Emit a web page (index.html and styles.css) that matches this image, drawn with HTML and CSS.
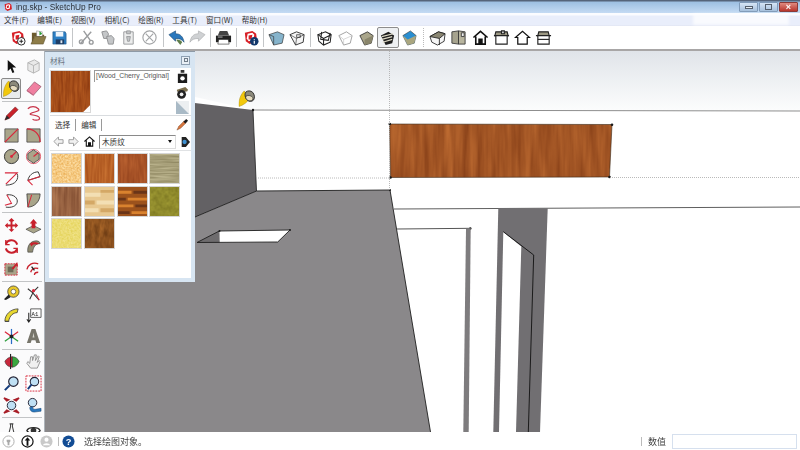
FILE: index.html
```html
<!DOCTYPE html>
<html lang="zh">
<head>
<meta charset="utf-8">
<title>ing.skp - SketchUp Pro</title>
<link rel="stylesheet" href="styles.css">
</head>
<body>
<svg class="defs" aria-hidden="true">
  <defs>
    <filter id="wood" x="0" y="0" width="1" height="1" color-interpolation-filters="sRGB"><feTurbulence type="fractalNoise" baseFrequency="0.13 0.012" numOctaves="3" seed="4"/><feColorMatrix values="0.3 0 0 0 0.48  0.24 0 0 0 0.21  0.14 0 0 0 0.07  0 0 0 0 1"/><feComposite in2="SourceGraphic" operator="in"/></filter>
    <filter id="woodp" x="0" y="0" width="1" height="1" color-interpolation-filters="sRGB"><feTurbulence type="fractalNoise" baseFrequency="0.4 0.04" numOctaves="3" seed="9"/><feColorMatrix values="0.24 0 0 0 0.52  0.2 0 0 0 0.2  0.1 0 0 0 0.05  0 0 0 0 1"/><feComposite in2="SourceGraphic" operator="in"/></filter>
    <filter id="s1" x="0" y="0" width="1" height="1" color-interpolation-filters="sRGB"><feTurbulence type="fractalNoise" baseFrequency="0.5" numOctaves="2" seed="2"/><feColorMatrix values="0.12 0 0 0 0.9  0.3 0 0 0 0.64  0.5 0 0 0 0.26  0 0 0 0 1"/><feComposite in2="SourceGraphic" operator="in"/></filter>
    <filter id="s2" x="0" y="0" width="1" height="1" color-interpolation-filters="sRGB"><feTurbulence type="fractalNoise" baseFrequency="0.4 0.03" numOctaves="2" seed="3"/><feColorMatrix values="0.24 0 0 0 0.6  0.24 0 0 0 0.26  0.16 0 0 0 0.07  0 0 0 0 1"/><feComposite in2="SourceGraphic" operator="in"/></filter>
    <filter id="s3" x="0" y="0" width="1" height="1" color-interpolation-filters="sRGB"><feTurbulence type="fractalNoise" baseFrequency="0.3 0.05" numOctaves="2" seed="6"/><feColorMatrix values="0.2 0 0 0 0.55  0.16 0 0 0 0.24  0.1 0 0 0 0.1  0 0 0 0 1"/><feComposite in2="SourceGraphic" operator="in"/></filter>
    <filter id="s4" x="0" y="0" width="1" height="1" color-interpolation-filters="sRGB"><feTurbulence type="fractalNoise" baseFrequency="0.04 0.5" numOctaves="2" seed="5"/><feColorMatrix values="0.3 0 0 0 0.5  0.3 0 0 0 0.47  0.3 0 0 0 0.32  0 0 0 0 1"/><feComposite in2="SourceGraphic" operator="in"/></filter>
    <filter id="s5" x="0" y="0" width="1" height="1" color-interpolation-filters="sRGB"><feTurbulence type="fractalNoise" baseFrequency="0.3 0.03" numOctaves="2" seed="8"/><feColorMatrix values="0.28 0 0 0 0.46  0.26 0 0 0 0.26  0.2 0 0 0 0.16  0 0 0 0 1"/><feComposite in2="SourceGraphic" operator="in"/></filter>
    <filter id="s8" x="0" y="0" width="1" height="1" color-interpolation-filters="sRGB"><feTurbulence type="fractalNoise" baseFrequency="0.2" numOctaves="2" seed="7"/><feColorMatrix values="0.2 0 0 0 0.46  0.2 0 0 0 0.44  0.1 0 0 0 0.12  0 0 0 0 1"/><feComposite in2="SourceGraphic" operator="in"/></filter>
    <filter id="s9" x="0" y="0" width="1" height="1" color-interpolation-filters="sRGB"><feTurbulence type="fractalNoise" baseFrequency="0.5" numOctaves="2" seed="12"/><feColorMatrix values="0.08 0 0 0 0.88  0.1 0 0 0 0.81  0.3 0 0 0 0.3  0 0 0 0 1"/><feComposite in2="SourceGraphic" operator="in"/></filter>
    <filter id="s10" x="0" y="0" width="1" height="1" color-interpolation-filters="sRGB"><feTurbulence type="fractalNoise" baseFrequency="0.2 0.08" numOctaves="3" seed="14"/><feColorMatrix values="0.34 0 0 0 0.38  0.24 0 0 0 0.2  0.12 0 0 0 0.06  0 0 0 0 1"/><feComposite in2="SourceGraphic" operator="in"/></filter>
    <symbol id="su" viewBox="0 0 18 18"><path d="M3 4l8-2 4 3 1 8-8 3-4-3z" fill="#d81f26"/><path d="M6 5l5-1 2 2-1 6-5 1-2-3z" fill="#fff"/><path d="M7 7l4-1-1 5-3 0z" fill="#d81f26"/></symbol>
    <symbol id="bucket" viewBox="0 0 18 18"><path d="M6 1C2 5 0 11 .5 17.500 5 16 10 13 12 8z" fill="#f2c80c" stroke="#a68a10" stroke-width=".5"/><path d="M8 2c2-1.500 5-1.500 7 .5s2.500 6 1 8-5 2-7 0-3-6.500-1-8.500z" fill="#8c8a7c" stroke="#2c2c2c" stroke-width="1"/><path d="M8 6.500c2-1.500 6-.5 7 1.500s-.5 3.500-3 3.500-5.500-3-4-5z" fill="#e6dcc0" stroke="#2c2c2c" stroke-width=".7"/></symbol>
  </defs>
</svg>
<div class="app">
  <header class="titlebar">
    <svg class="title-logo" viewBox="0 0 18 18"><use href="#su"/></svg>
    <span class="title-text">ing.skp - SketchUp Pro</span>
    <div class="win-btns">
      <span class="win-btn"><i class="wb-min"></i></span>
      <span class="win-btn"><i class="wb-max"></i></span>
      <span class="win-btn win-close"><i class="wb-x">×</i></span>
    </div>
  </header>
  <nav class="menubar">
    <span>文件(F)</span><span>编辑(E)</span><span>视图(V)</span><span>相机(C)</span><span>绘图(R)</span><span>工具(T)</span><span>窗口(W)</span><span>帮助(H)</span>
    <i class="mark"></i>
  </nav>
  <div class="toolbar">
    <span class="tb"><svg viewBox="0 0 18 18"><use href="#su"/><circle cx="13" cy="13" r="4" fill="#fff" stroke="#222"/><path d="M13 11v4M11 13h4" stroke="#222"/></svg></span>
    <span class="tb"><svg viewBox="0 0 18 18"><path d="M2 4h5l1 2h7v2H5L2 15z" fill="#6b5a2e"/><path d="M7 2l6 1 0 5-6 0z" fill="#fff" stroke="#7a7a7a" stroke-width=".5"/><path d="M10 2l3 3-3 2z" fill="#2f9e3a"/><path d="M5 8h12l-3 8H1z" fill="#8d7c48" stroke="#4a3f1e" stroke-width=".5"/></svg></span>
    <span class="tb"><svg viewBox="0 0 18 18"><path d="M2 3h13l1 2v11H2z" fill="#2c7fc4" stroke="#1b4f80" stroke-width=".6"/><path d="M5 3h8v5H5z" fill="#eef4fa"/><path d="M5 11h9v5H5z" fill="#1e3e66"/><path d="M10 12h2v3h-2z" fill="#dfe8f0"/></svg></span>
    <i class="tsep"></i>
    <span class="tb"><svg viewBox="0 0 18 18" fill="none" stroke="#9a9c9e" stroke-width="1.5"><path d="M3 15L14 3M6 2l7 10"/><circle cx="3.5" cy="13.5" r="2"/><circle cx="14" cy="14" r="2"/></svg></span>
    <span class="tb"><svg viewBox="0 0 18 18" fill="#c4c6c8" stroke="#8f9193"><path d="M3 3l5-1 2 3-1 5-4 0z"/><path d="M8 8l5-1 3 3-1 6-5 0z"/></svg></span>
    <span class="tb"><svg viewBox="0 0 18 18" fill="#eceded" stroke="#9a9c9e"><path d="M4 3h10v13H4z"/><path d="M7 2h4v3H7z" fill="#c4c6c8"/><path d="M7 8h4l-1 5H8z" fill="#c4c6c8"/></svg></span>
    <span class="tb"><svg viewBox="0 0 18 18" fill="none" stroke="#a2a4a6" stroke-width="1.2"><circle cx="9" cy="9" r="7"/><path d="M5 5l8 8M13 5l-8 8"/></svg></span>
    <i class="tsep"></i>
    <span class="tb"><svg viewBox="0 0 18 18"><path d="M1 6l7-4v3c5 0 8 3 9 9-2-3-5-4-9-4v3z" fill="#2a78bd" stroke="#123f6b" stroke-width=".6"/><path d="M9 11c3 0 5 1 6 3l-2 3-4-5z" fill="#5f7d4a"/></svg></span>
    <span class="tb"><svg viewBox="0 0 18 18"><path d="M17 6l-7-4v3C5 5 2 8 1 14c2-3 5-4 9-4v3z" fill="#cfd1d3" stroke="#a3a5a7" stroke-width=".6"/></svg></span>
    <i class="tsep"></i>
    <span class="tb"><svg viewBox="0 0 18 18"><path d="M5 2h8l2 5H3z" fill="#444"/><path d="M1 7h16v7H1z" fill="#222"/><path d="M4 11h10l1 5H3z" fill="#fff" stroke="#222" stroke-width=".6"/><path d="M3 8h5v1H3z" fill="#bbb"/></svg></span>
    <i class="tsep"></i>
    <span class="tb"><svg viewBox="0 0 18 18"><use href="#su"/><circle cx="13" cy="13" r="4.5" fill="#12386b"/><path d="M13 10.500v.8M13 12.500v3" stroke="#fff" stroke-width="1.200"/></svg></span>
    <i class="tsep"></i>
    <span class="tb"><svg viewBox="0 0 18 18"><path d="M1 6l9-3 7 3-2 9-9 2z" fill="#86b4cc" stroke="#333" stroke-width=".7"/><path d="M1 6l5 2v9" fill="none" stroke="#333" stroke-width=".7"/></svg></span>
    <span class="tb"><svg viewBox="0 0 18 18"><path d="M1 6l7-3 8 3-1 8-8 3z" fill="#f5f5f5" stroke="#333"/><path d="M8 10l8-4M8 10l-1 7M8 10L1 6M8 6h4v3H8z" stroke="#333" stroke-width=".7" fill="#d8d8d8"/></svg></span>
    <i class="tsep tsep-n"></i>
    <span class="tb"><svg viewBox="0 0 18 18" fill="none" stroke="#222" stroke-width="1.100"><path d="M2 6l8-3 6 3-1 8-7 3-5-4z"/><path d="M8 10l8-4M8 10v7M8 10L2 6M6 3l-1 8 8 1 2-8"/></svg></span>
    <span class="tb"><svg viewBox="0 0 18 18"><path d="M2 7l8-4 6 4-2 8-7 2z" fill="#fff" stroke="#888" stroke-width=".8"/><path d="M7 17l0-6 9-4M7 11L2 7" fill="none" stroke="#bbb" stroke-width=".6"/></svg></span>
    <span class="tb"><svg viewBox="0 0 18 18"><path d="M2 7l8-4 6 4-2 8-7 2z" fill="#a9a58a" stroke="#333" stroke-width=".9"/><path d="M7 11l9-4v1l-2 7-7 2z" fill="#8a866c"/></svg></span>
    <span class="tb tb-on"><svg viewBox="0 0 18 18"><path d="M2 7l8-4 6 4-2 8-7 2z" fill="#1d1d1d"/><path d="M3 8l12-3M3 11l11-3M4 14l10-3" stroke="#dcd8c4" stroke-width="1.300"/></svg></span>
    <span class="tb"><svg viewBox="0 0 18 18"><path d="M2 7l8-5 6 5-2 8-7 2z" fill="#2a8ed0" stroke="#333" stroke-width=".6"/><path d="M2 7l5 4 9-4-2 8-7 2z" fill="#aaa67f"/></svg></span>
    <i class="tsep tsep-d"></i>
    <span class="tb"><svg viewBox="0 0 18 18" stroke="#222" stroke-width=".9"><path d="M1 8l9-5 7 2-1 8-7 4-6-3z" fill="#f6f6f6"/><path d="M1 8l9-5 7 2-6 5z" fill="#8a8672"/><path d="M11 10v7" fill="none"/></svg></span>
    <span class="tb"><svg viewBox="0 0 18 18" stroke="#333" stroke-width=".9"><path d="M2 3l7-1v14l-7-1z" fill="#a6a38e"/><path d="M9 2l7 1v13l-7 0z" fill="#b8b59f"/><path d="M12 4h3v4h-3z" fill="#eee"/></svg></span>
    <span class="tb"><svg viewBox="0 0 18 18" fill="#fff" stroke="#111" stroke-width="1.700"><path d="M1.500 9L9 2.500 16.500 9M4 8v8h10V8"/><path d="M7.500 16v-5h3v5" fill="#111"/></svg></span>
    <span class="tb"><svg viewBox="0 0 18 18" stroke="#222" stroke-width="1.200"><path d="M2 7h14l-1-4H3z" fill="#9c9883"/><path d="M9 2h3v3H9z" fill="#ddd"/><path d="M1 7h16M3 7v9h12V7" fill="#fff"/></svg></span>
    <span class="tb"><svg viewBox="0 0 18 18" fill="#fff" stroke="#111" stroke-width="1.300"><path d="M1.500 9L9 2.500 16.500 9 14 9v7H4V9z"/></svg></span>
    <span class="tb"><svg viewBox="0 0 18 18" stroke="#222" stroke-width="1.200"><path d="M3 7l1-4h10l1 4z" fill="#9c9883"/><path d="M1 7h16M3 7v9h12V7" fill="#fff"/><path d="M3 11h12" fill="none"/></svg></span>
  </div>
  <main class="work">
    <aside class="lefttools">
      <div class="lt-grip"></div>
      <div class="lt-row"><span class="lb"><svg viewBox="0 0 18 18"><path d="M5 2v12l3-3 2 5 2-1-2-5h4z" fill="#111"/></svg></span><span class="lb"><svg viewBox="0 0 18 18" stroke="#b5b5b5" fill="#e9e9e9"><path d="M3 5l7-3 5 3v8l-6 3-6-3z"/><path d="M9 8l6-3M9 8v8M9 8L3 5"/></svg></span></div>
      <div class="lt-row"><span class="lb lb-on"><svg viewBox="0 0 18 18"><use href="#bucket"/></svg></span><span class="lb"><svg viewBox="0 0 18 18"><path d="M2 11L10 2l7 5-8 9z" fill="#ef7fa0" stroke="#7b3b50" stroke-width=".6"/><path d="M2 11l7 5 0 1-7-5z" fill="#c65c7c"/></svg></span></div>
      <i class="lsep"></i>
      <div class="lt-row"><span class="lb"><svg viewBox="0 0 18 18"><path d="M2 16l2-5L13 2l3 3-9 9z" fill="#c9232b" stroke="#5a1013" stroke-width=".5"/><path d="M2 16l2-5 3 3z" fill="#2b2b2b"/></svg></span><span class="lb"><svg viewBox="0 0 18 18" fill="none" stroke="#c8354a" stroke-width="1.300"><path d="M3 4c3-3 8-3 11 0s-5 3-8 5 7 1 9 4-4 4-7 2"/></svg></span></div>
      <div class="lt-row"><span class="lb"><svg viewBox="0 0 18 18"><path d="M2 2h14v14H2z" fill="#a9a58a" stroke="#444" stroke-width=".8"/><path d="M2 16L16 2" stroke="#d8283c" stroke-width="1.300"/></svg></span><span class="lb"><svg viewBox="0 0 18 18"><path d="M2 2h14v14H2z" fill="#a9a58a" stroke="#444" stroke-width=".8"/><path d="M2 2c8 0 14 6 14 14" fill="none" stroke="#d8283c" stroke-width="1.300"/></svg></span></div>
      <div class="lt-row"><span class="lb"><svg viewBox="0 0 18 18"><circle cx="9" cy="9" r="7.500" fill="#a9a58a" stroke="#333"/><path d="M9 9l5-5" stroke="#d8283c" stroke-width="1.300"/><circle cx="9" cy="9" r="1.500" fill="#d8283c"/></svg></span><span class="lb"><svg viewBox="0 0 18 18"><circle cx="9" cy="9" r="7.500" fill="none" stroke="#d8283c" stroke-width=".8"/><path d="M9 2l6 4v6l-6 4-6-4V6z" fill="#a9a58a" stroke="#333" stroke-width=".8"/><path d="M9 9l5-4" stroke="#d8283c" stroke-width="1.300"/></svg></span></div>
      <div class="lt-row"><span class="lb"><svg viewBox="0 0 18 18" fill="none"><path d="M2 3h13L3 15" stroke="#d8283c" stroke-width="1.200"/><path d="M15 4c2 5-1 12-12 12" stroke="#333"/></svg></span><span class="lb"><svg viewBox="0 0 18 18"><path d="M3 11C4 6 8 2 14 2l2 5z" fill="#fff" stroke="#333"/><path d="M3 11l13-4M3 11l5 5" stroke="#d8283c" stroke-width="1.100"/></svg></span></div>
      <div class="lt-row"><span class="lb"><svg viewBox="0 0 18 18" fill="none"><path d="M4 3c8-1 12 4 11 8s-6 6-12 5" stroke="#333"/><path d="M4 3l5 9-7 2" stroke="#d8283c" stroke-width="1.100"/></svg></span><span class="lb"><svg viewBox="0 0 18 18"><path d="M2 2h14c0 8-6 14-13 14z" fill="#a9a58a" stroke="#333" stroke-width=".8"/><path d="M3 16L7 3" stroke="#d8283c" stroke-width="1.100"/></svg></span></div>
      <i class="lsep"></i>
      <div class="lt-row"><span class="lb"><svg viewBox="0 0 18 18" fill="#c8202c"><path d="M9 1l3 3-2 1v3h3V6l3 3-3 3v-2h-3v3h2l-3 3-3-3h2v-3H5v2L2 9l3-3v2h3V5L6 4z"/></svg></span><span class="lb"><svg viewBox="0 0 18 18"><path d="M1 13l8-4 8 4-8 4z" fill="#a9a58a" stroke="#333" stroke-width=".6"/><path d="M9 2l4 5h-2v5H7V7H5z" fill="#c8202c"/></svg></span></div>
      <div class="lt-row"><span class="lb"><svg viewBox="0 0 18 18" fill="none" stroke="#c8202c" stroke-width="2.200"><path d="M15 7a6.500 6.500 0 0 0-12-1"/><path d="M3 11a6.500 6.500 0 0 0 12 1"/><path d="M3 2v5h4M15 16v-5h-4" stroke-width="1.500"/></svg></span><span class="lb"><svg viewBox="0 0 18 18"><path d="M3 15C2 8 6 3 12 3c3 0 4 2 4 3-5 0-7 3-8 9z" fill="#8f8b72" stroke="#333" stroke-width=".6"/><path d="M5 6c3-2 7-2 10 0l-3 1c-2-1-4 0-5 2z" fill="#c8202c"/></svg></span></div>
      <div class="lt-row"><span class="lb"><svg viewBox="0 0 18 18"><path d="M2 4h13v12H2z" fill="#a9a58a" stroke="#d8283c" stroke-dasharray="2 1"/><path d="M5 7h6v6H5z" fill="#6e6b57"/><path d="M9 9l6-7 1 5-2-1-3 4z" fill="#c8202c"/></svg></span><span class="lb"><svg viewBox="0 0 18 18" fill="none" stroke="#c8202c" stroke-width="1.400"><path d="M2 10C3 5 8 2 14 4M6 13c1-3 4-5 8-4M10 16c0-2 2-3 4-3"/><path d="M7 7l3 4" stroke="#222"/></svg></span></div>
      <i class="lsep"></i>
      <div class="lt-row"><span class="lb"><svg viewBox="0 0 18 18"><circle cx="11" cy="7" r="6" fill="#e8c82a" stroke="#333" stroke-width=".8"/><circle cx="11" cy="7" r="2.500" fill="#fff" stroke="#333" stroke-width=".6"/><path d="M6 10L1 15l2 1 5-3z" fill="#222"/></svg></span><span class="lb"><svg viewBox="0 0 18 18" fill="none" stroke="#333" stroke-width="1.100"><path d="M3 4l5 4 7 8M14 2L9 7l-4 8"/><circle cx="9" cy="6" r="1.700" fill="#d8283c" stroke="none"/><path d="M12 10l3 6" stroke="#d8283c"/></svg></span></div>
      <div class="lt-row"><span class="lb"><svg viewBox="0 0 18 18"><path d="M2 15C2 8 8 2 16 2l-1 4C11 6 7 9 6 15z" fill="#e8d830" stroke="#333" stroke-width=".8"/><path d="M2 15h4l1 1H2z" fill="#333"/></svg></span><span class="lb"><svg viewBox="0 0 18 18"><path d="M6 2h11v9H6z" fill="#fff" stroke="#333" stroke-width=".8"/><text x="7" y="9.500" class="a1">A1</text><path d="M4 6v9M2 13l2 3 2-3" stroke="#222" fill="none" stroke-width="1.100"/></svg></span></div>
      <div class="lt-row"><span class="lb"><svg viewBox="0 0 18 18" stroke-width="1.300"><path d="M9 9L2 4" stroke="#d8283c"/><path d="M9 9l7 5" stroke="#2a9c3a"/><path d="M9 9V1" stroke="#2a6cc8"/><path d="M9 9L2 14" stroke="#2a9c3a"/><path d="M9 9l7-5" stroke="#d8283c"/><path d="M9 9v8" stroke="#2a6cc8"/><circle cx="9" cy="9" r="2" fill="#222" stroke="none"/></svg></span><span class="lb"><svg viewBox="0 0 18 18"><path d="M7 1h4l5 15H12l-1-3H7l-1 3H2z" fill="#77756b"/><path d="M9 5l-1 5h2z" fill="#d6d5ce"/></svg></span></div>
      <i class="lsep"></i>
      <div class="lt-row"><span class="lb"><svg viewBox="0 0 18 18"><path d="M2 9c2-4 6-5 8-5v11C6 15 3 13 2 9z" fill="#c8283c" stroke="#333" stroke-width=".6"/><path d="M10 4c3 0 6 2 7 5-1 3-4 6-7 6z" fill="#3aa83f" stroke="#333" stroke-width=".6"/><path d="M8 1v16" stroke="#222" stroke-width="1.200"/></svg></span><span class="lb"><svg viewBox="0 0 18 18" fill="#f0f0f0" stroke="#8a8a8a" stroke-width=".9"><path d="M2 11l4 5h7l3-7-1-1-2 2 2-6-1-1-3 5 1-6-2 0-2 6V4H6L5 11 3 9z"/></svg></span></div>
      <div class="lt-row"><span class="lb"><svg viewBox="0 0 18 18"><circle cx="11" cy="7" r="5" fill="#bfe0f4" stroke="#223" stroke-width="1.200"/><path d="M7 11l-5 5" stroke="#123a7a" stroke-width="2.200"/></svg></span><span class="lb"><svg viewBox="0 0 18 18"><path d="M1 1h16v16H1z" fill="#fff" stroke="#d8283c" stroke-dasharray="2 1"/><circle cx="10" cy="7" r="4.500" fill="#bfe0f4" stroke="#223" stroke-width="1.100"/><path d="M7 10l-4 5" stroke="#123a7a" stroke-width="2"/></svg></span></div>
      <div class="lt-row"><span class="lb"><svg viewBox="0 0 18 18"><circle cx="9" cy="9" r="4.500" fill="#bfe0f4" stroke="#223"/><path d="M1 1l5 2-2 1zM17 1l-5 2 2 1zM1 17l5-2-2-1zM17 17l-5-2 2-1z" fill="#a81e28" stroke="#a81e28" stroke-width="1.500"/></svg></span><span class="lb"><svg viewBox="0 0 18 18"><circle cx="8" cy="6" r="4.500" fill="#bfe0f4" stroke="#223"/><path d="M17 15l-7 1c-4 0-5-3-5-5l3-1c0 3 2 3 3 3l6-1z" fill="#2a78bd" stroke="#123f6b" stroke-width=".5"/></svg></span></div>
      <i class="lsep"></i>
      <div class="lt-row"><span class="lb"><svg viewBox="0 0 18 18" fill="none" stroke="#444" stroke-width="1.100"><path d="M8 2v3l-3 12M10 2v3l3 12M7 2h4"/></svg></span><span class="lb"><svg viewBox="0 0 18 18"><path d="M2 9c2-4 12-4 14 0-2 4-12 4-14 0z" fill="#fff" stroke="#222" stroke-width="1.400"/><circle cx="9" cy="9" r="3" fill="#333"/></svg></span></div>
    </aside>
    <div class="canvas">
      <svg class="scene" viewBox="45 51 755 381" preserveAspectRatio="none">
        <defs>
          <linearGradient id="sky" x1="0" y1="0" x2="0" y2="1"><stop offset="0" stop-color="#e0e4e9"/><stop offset="1" stop-color="#fcfdfd"/></linearGradient>
        </defs>
        <rect x="45" y="51" width="755" height="381" fill="#fff"/>
        <path d="M195 51H800V111L253 110 195 97z" fill="url(#sky)"/>
        <path d="M45 85L253 110 256.500 191 45 281z" fill="#636164"/>
        <path d="M253 110L256.500 191" stroke="#222" stroke-width=".8"/>
        <path d="M45 281L256.500 191 390 190 430.500 432H45z" fill="#8a888a"/>
        <path d="M195 217L256.500 191 390 190 430.500 432" fill="none" stroke="#1e1e1e" stroke-width=".9"/>
        <path d="M253 110L800 111" stroke="#8e8e8e" stroke-width="1"/>
        <path d="M219.300 231L290 230 277.700 242 219.500 242.500z" fill="#fff"/>
        <path d="M197 242.500L219.300 231 219.500 242.500z" fill="#6e6c6e"/>
        <path d="M197 242.500L277.700 242 290 230 219.300 231z" fill="none" stroke="#1e1e1e" stroke-width=".9"/>
        <path d="M389.500 124L612 124.500 609.500 177 390.500 177.500z" fill="#a4571f" filter="url(#wood)"/>
        <path d="M389.500 124L612 124.500 609.500 177 390.500 177.500z" fill="none" stroke="#3a2a1a" stroke-width=".6"/>
        <g fill="#1a1a1a"><circle cx="253" cy="110" r="1.200"/><circle cx="389.800" cy="124" r="1.300"/><circle cx="612" cy="124.700" r="1.300"/><circle cx="609.500" cy="177" r="1.300"/><circle cx="390.500" cy="177.500" r="1.300"/><circle cx="390" cy="190" r="1"/><circle cx="219.500" cy="231" r="1"/><circle cx="290" cy="230" r="1"/><circle cx="470.300" cy="228.500" r="1.200"/><circle cx="503.300" cy="232" r="1.200"/><circle cx="533.700" cy="255" r="1"/></g>
        <path d="M389.500 51V190M256 178H390M610 177.500H800" stroke="#a8a8a8" stroke-width=".8" stroke-dasharray="1 1" fill="none"/>
        <path d="M394 209L800 207" stroke="#5f5f5f" stroke-width="1"/>
        <path d="M397 229L470.700 228.300" stroke="#555" stroke-width="1"/>
        <path d="M466 229L470.700 228.300 468.700 432H463.300z" fill="#7e7c7e"/>
        <path d="M498.300 208.300H547.700L540 432H493.300z" fill="#716f72"/>
        <path d="M503.300 232L521.300 246.500 516 432H499z" fill="#fff"/>
        <path d="M503.300 231.700L533.700 255 528.300 432" fill="none" stroke="#111" stroke-width=".9"/>
        <use href="#bucket" x="238.500" y="90" width="17" height="17"/>
      </svg>
      <section class="panel">
        <div class="p-title"><span>材料</span><span class="p-close"><i></i></span></div>
        <div class="p-body">
          <div class="p-top">
            <div class="p-preview"><svg viewBox="0 0 40 42" preserveAspectRatio="none"><rect width="40" height="42" fill="#a5521f" filter="url(#woodp)"/><path d="M40 35v7h-7z" fill="#fff"/></svg></div>
            <div class="p-name">[Wood_Cherry_Original]</div>
            <div class="p-side">
              <svg viewBox="0 0 14 14"><path d="M5 0h4v3H5z" fill="#333"/><path d="M2 4h10v10H2z" fill="#1c1c1c"/><circle cx="7" cy="9" r="2.400" fill="#fff"/></svg>
              <svg viewBox="0 0 14 14"><path d="M1 4l9-3 3 3-1 2H1z" fill="#7c6f4e"/><circle cx="6" cy="9" r="4.800" fill="#222"/><circle cx="6" cy="9" r="2" fill="#eee"/></svg>
              <svg viewBox="0 0 14 14"><path d="M0 0h14v14H0z" fill="#eceff1"/><path d="M0 0l14 14H0z" fill="#a9bac6"/></svg>
            </div>
          </div>
          <div class="p-tabs">
            <span class="p-tab">选择</span><span class="p-tab">编辑</span>
            <svg class="p-drop" viewBox="0 0 14 14"><path d="M1 13l2-4 6-6 2 2-6 6z" fill="#d9773f" stroke="#7c4a2e" stroke-width=".5"/><path d="M8 4l3-3 2 2-3 3z" fill="#1c1c1c"/></svg>
          </div>
          <div class="p-nav">
            <svg class="p-ar" viewBox="0 0 12 12"><path d="M1 6l5-5v3h5v4H6v3z" fill="#f1f1f1" stroke="#9a9a9a"/></svg>
            <svg class="p-ar" viewBox="0 0 12 12"><path d="M11 6L6 1v3H1v4h5v3z" fill="#f1f1f1" stroke="#9a9a9a"/></svg>
            <svg class="p-home" viewBox="0 0 12 12" fill="#fff" stroke="#111" stroke-width="1.200"><path d="M.5 6L6 1l5.500 5M2.500 5v6h7V5"/><path d="M5 11V7.500h2V11" fill="#111"/></svg>
            <div class="p-select"><span>木质纹</span><b></b></div>
            <svg class="p-go" viewBox="0 0 12 14"><path d="M2 1h5l5 6-5 6H2z" fill="#222"/><circle cx="5.500" cy="7" r="2.600" fill="#3d8fd0"/></svg>
          </div>
          <div class="p-grid">
            <svg class="sw" viewBox="0 0 30 30"><rect width="30" height="30" fill="#fc8" filter="url(#s1)"/></svg>
            <svg class="sw" viewBox="0 0 30 30"><rect width="30" height="30" fill="#b8662a" filter="url(#s2)"/></svg>
            <svg class="sw" viewBox="0 0 30 30"><rect width="30" height="30" fill="#a5522a" filter="url(#s3)"/></svg>
            <svg class="sw" viewBox="0 0 30 30"><rect width="30" height="30" fill="#a8a078" filter="url(#s4)"/></svg>
            <svg class="sw" viewBox="0 0 30 30"><rect width="30" height="30" fill="#9a6540" filter="url(#s5)"/></svg>
            <svg class="sw" viewBox="0 0 30 30"><rect width="30" height="30" fill="#e8c890"/><path d="M0 6h16v4H0zM12 14h18v4H12zM0 22h14v4H0z" fill="#f3dfb4"/><path d="M16 3h14v3H16zM0 14h10v4H0zM16 22h14v4H16z" fill="#d4a866"/></svg>
            <svg class="sw" viewBox="0 0 30 30"><rect width="30" height="30" fill="#9c521c"/><path d="M0 4h14v3H0zM10 11h20v3H10zM0 18h16v3H0zM14 25h16v3H14z" fill="#d9822e"/><path d="M16 4h14v3H16zM0 11h8v3H0zM18 18h12v3H18zM0 25h12v3H0z" fill="#6a3518"/></svg>
            <svg class="sw" viewBox="0 0 30 30"><rect width="30" height="30" fill="#8c8a30" filter="url(#s8)"/></svg>
            <svg class="sw" viewBox="0 0 30 30"><rect width="30" height="30" fill="#e8dc70" filter="url(#s9)"/></svg>
            <svg class="sw" viewBox="0 0 30 30"><rect width="30" height="30" fill="#8f4f20" filter="url(#s10)"/></svg>
          </div>
        </div>
      </section>
    </div>
  </main>
  <footer class="status">
    <svg class="st" viewBox="0 0 14 14"><circle cx="7" cy="7" r="6" fill="#fff" stroke="#aaa"/><path d="M5 5h4v2l-1 1v3H6V8L5 7z" fill="#aaa"/></svg>
    <svg class="st" viewBox="0 0 14 14"><circle cx="7" cy="7" r="6" fill="#fff" stroke="#111" stroke-width="1.300"/><path d="M7 2.500L10 6H8v5.500H6V6H4z" fill="#111"/></svg>
    <svg class="st" viewBox="0 0 14 14"><circle cx="7" cy="7" r="6.500" fill="#c9c9c9"/><circle cx="7" cy="5" r="2.200" fill="#fff"/><path d="M3 11c1-3 7-3 8 0z" fill="#fff"/></svg>
    <i class="st-sep"></i>
    <svg class="st" viewBox="0 0 14 14"><circle cx="7" cy="7" r="6.500" fill="#124c94"/><text x="7" y="10.500" class="q">?</text></svg>
    <span class="st-text">选择绘图对象。</span>
    <i class="st-sep st-sep-r"></i>
    <span class="st-label">数值</span>
    <span class="st-input"></span>
  </footer>
</div>
</body>
</html>
```

FILE: styles.css
```css
* { box-sizing: border-box; }
html, body { margin: 0; padding: 0; background: #fff; }
body { width: 800px; height: 450px; overflow: hidden; font-family: "Noto Sans CJK SC", "Liberation Sans", sans-serif; color: #333; }
.defs { display: block; width: 0; height: 0; }
.app { display: flex; flex-direction: column; width: 800px; height: 450px; filter: blur(0.35px); }
svg { display: block; }

.titlebar { flex: 0 0 13px; display: flex; align-items: center; padding-left: 3px; background: linear-gradient(#55647a 0, #55647a 1px, #9dbfe2 2px, #c4dbf3 13px); }
.title-logo { width: 10px; height: 10px; }
.title-text { margin-left: 3px; font: 8.3px "Liberation Sans", sans-serif; color: #2a3038; }
.win-btns { display: flex; gap: 1px; margin-left: auto; margin-right: 2px; align-self: flex-start; margin-top: 2px; }
.win-btn { display: flex; align-items: center; justify-content: center; width: 19px; height: 10px; border: 1px solid #7f9ab8; border-radius: 1px; background: linear-gradient(#d6e5f5, #a6c0dc); }
.win-close { background: linear-gradient(#e08a80, #b8352c); border-color: #8a3a38; }
.wb-min { display: block; width: 8px; height: 3px; border: 1px solid #55606e; background: #e8eef4; }
.wb-max { display: block; width: 7px; height: 6px; border: 1px solid #55606e; }
.wb-x { font: bold 9px/8px "Liberation Sans", sans-serif; color: #fff; font-style: normal; }

.menubar { position: relative; flex: 0 0 13px; display: flex; align-items: center; padding-left: 4px; gap: 8.8px; background: linear-gradient(#fbfcff 0, #fbfcff 2px, #e9eefb 3px, #e9eefb 12px, #dfe3f0 13px); font-size: 7.6px; line-height: 13px; color: #333; }
.mark { position: absolute; left: 693px; top: 1px; width: 96px; height: 11px; background: rgba(255, 255, 255, .7); filter: blur(1.5px); }

.toolbar { flex: 0 0 25px; display: flex; align-items: center; padding-left: 6.500px; background: #fff; border-bottom: 2px solid #a8a6a6; }
.tb { display: flex; align-items: center; justify-content: center; width: 21.300px; height: 21px; border: 1px solid transparent; border-radius: 2px; }
.tb svg { width: 17px; height: 17px; }
.tb-on { background: #eef0f2; border-color: #8d8d8d; }
.tsep { flex: 0 0 1px; width: 1px; height: 19px; margin: 0 2px; background: #c4c6c8; }
.tsep-n { margin: 0 2px; }
.tsep-d { margin: 0 3px; background: repeating-linear-gradient(#bbb 0 1px, transparent 1px 2px); }

.work { flex: 1 1 auto; display: flex; min-height: 0; }
.lefttools { flex: 0 0 45px; display: flex; flex-direction: column; align-items: center; overflow: hidden; background: #fbfbfc; border-right: 1px solid #aeb4ba; padding-top: 2px; }
.lt-grip { width: 36px; height: 1px; margin-bottom: 3px; background: repeating-linear-gradient(90deg, #bbb 0 1px, transparent 1px 2px); }
.lt-row { flex: 0 0 21.700px; display: flex; gap: 1.500px; align-items: center; }
.lb { display: flex; align-items: center; justify-content: center; width: 20.500px; height: 20.500px; border: 1px solid transparent; border-radius: 2px; }
.lb svg { width: 17px; height: 17px; }
.lb-on { background: #e9ebec; border-color: #8a8a8a; }
.lsep { flex: 0 0 1px; width: 40px; margin: 1.150px 0; background: #c2c4c6; }
.a1 { font: 6px "Liberation Mono", monospace; fill: #222; }

.canvas { position: relative; flex: 1 1 auto; min-width: 0; overflow: hidden; }
.scene { width: 100%; height: 100%; }
.panel { position: absolute; left: 0; top: 0; width: 150px; height: 231px; display: flex; flex-direction: column; padding: 0 4px 4px 4px; background: #d7e5f2; border-top: 1px solid #8e9aa6; }
.p-title { flex: 0 0 16px; display: flex; align-items: center; justify-content: space-between; padding: 0 1px 0 1px; font-size: 7.500px; color: #6b7480; }
.p-close { display: flex; align-items: center; justify-content: center; width: 9px; height: 9px; border: 1px solid #8ea0b2; background: #e8eff6; }
.p-close i { display: block; width: 4px; height: 4px; border: 1px solid #707c88; }
.p-body { flex: 1 1 auto; display: flex; flex-direction: column; background: #fff; padding: 2px 0 0 1px; }
.p-top { flex: 0 0 46px; display: flex; align-items: flex-start; border-bottom: 1px solid #d9dcdf; }
.p-preview { width: 41px; height: 43px; border: 1px solid #d8d8d8; }
.p-preview svg { width: 100%; height: 100%; }
.p-name { width: 76px; height: 12px; margin-left: 3px; border-top: 1px solid #9a9a9a; border-left: 1px solid #9a9a9a; font: 6.800px/10px "Liberation Sans", sans-serif; color: #555; padding-left: 1px; white-space: nowrap; }
.p-side { display: flex; flex-direction: column; gap: 2.500px; margin-left: 6px; }
.p-side svg { width: 13px; height: 13px; }
.p-tabs { flex: 0 0 17px; display: flex; align-items: center; padding-left: 3px; }
.p-tab { padding: 0 5px 0 2px; margin-right: 3px; font-size: 7.600px; line-height: 12px; color: #333; border-right: 1px solid #9a9a9a; }
.p-drop { width: 13px; height: 13px; margin-left: auto; margin-right: 2.500px; }
.p-nav { flex: 0 0 18px; display: flex; align-items: center; gap: 3px; padding-left: 3px; border-bottom: 1px solid #e0e2e4; }
.p-ar { width: 11px; height: 11px; margin-right: 1px; }
.p-home { width: 11px; height: 11px; margin: 0 1px; }
.p-select { display: flex; align-items: center; justify-content: space-between; width: 77px; height: 14px; padding: 0 2px; border: 1px solid #8a8a8a; border-right-color: #ddd; border-bottom-color: #ddd; font-size: 7.600px; color: #333; }
.p-select b { width: 0; height: 0; margin-right: 1px; border: 2.500px solid transparent; border-top: 3px solid #111; border-bottom: 0; }
.p-go { width: 10px; height: 12px; margin-left: 1px; }
.p-grid { display: grid; grid-template-columns: repeat(4, 31px); gap: 1.500px 1.800px; padding: 2px 0 0 1px; }
.sw { width: 31px; height: 31px; border: 1px solid #d6d6d6; }

.status { flex: 0 0 18px; display: flex; align-items: center; padding-left: 2px; background: #fff; font-size: 9px; color: #444; }
.st { width: 13px; height: 13px; margin-right: 6px; }
.st-sep { width: 1px; height: 9px; margin: 0 3px 0 -1px; background: #bbb; }
.st-text { margin-left: 3px; }
.st-sep-r { margin: 0 6px 0 auto; }
.st-label { margin-right: 6px; }
.st-input { width: 125px; height: 15px; margin-right: 3px; border: 1px solid #d6e0ee; background: #fff; }
.q { font: bold 10px "Liberation Sans", sans-serif; fill: #fff; text-anchor: middle; }
```
